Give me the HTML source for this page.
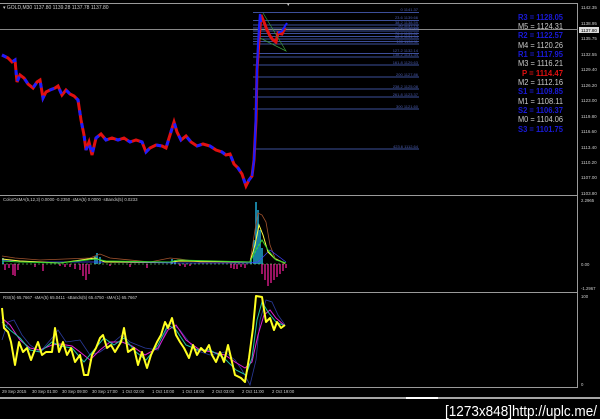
<!DOCTYPE html>
<html><head><meta charset="utf-8"><style>
html,body{margin:0;padding:0;background:#000;width:600px;height:419px;overflow:hidden}
svg{display:block}
text{font-family:"Liberation Sans",sans-serif}
</style></head><body>
<svg width="600" height="419" viewBox="0 0 600 419" xmlns="http://www.w3.org/2000/svg">
<rect width="600" height="419" fill="#000"/>
<g stroke="#9a9a9a" stroke-width="1" fill="none">
<line x1="0" y1="3.5" x2="578" y2="3.5"/>
<line x1="577.5" y1="3" x2="577.5" y2="388"/>
<line x1="0" y1="195.5" x2="578" y2="195.5"/>
<line x1="0" y1="292.5" x2="578" y2="292.5"/>
<line x1="0" y1="387.5" x2="578" y2="387.5"/>
</g>
<line x1="0" y1="398" x2="600" y2="398" stroke="#ddd" stroke-width="1.5"/>
<rect x="406" y="397" width="32" height="2" fill="#fff"/>
<line x1="0" y1="29.5" x2="578" y2="29.5" stroke="#888" stroke-width="1"/>
<text x="3" y="9" fill="#ccc" font-size="5">▾ GOLD,M30  1137.80 1139.28 1137.78 1137.80</text>
<text x="287" y="6" fill="#ccc" font-size="5">▾</text>
<g stroke="#3d4f9a" stroke-width="0.9">
<line x1="253" y1="12.5" x2="419" y2="12.5"/><line x1="253" y1="20.5" x2="419" y2="20.5"/>
<line x1="253" y1="25" x2="419" y2="25"/><line x1="253" y1="28" x2="419" y2="28"/>
<line x1="253" y1="31" x2="419" y2="31"/><line x1="253" y1="33.5" x2="419" y2="33.5"/>
<line x1="253" y1="36.5" x2="419" y2="36.5"/><line x1="253" y1="39" x2="419" y2="39"/>
<line x1="253" y1="41.5" x2="419" y2="41.5"/><line x1="253" y1="44" x2="419" y2="44"/>
<line x1="253" y1="53.5" x2="419" y2="53.5"/><line x1="253" y1="57" x2="419" y2="57"/>
<line x1="253" y1="65" x2="419" y2="65"/><line x1="253" y1="77" x2="419" y2="77"/>
<line x1="253" y1="89" x2="419" y2="89"/><line x1="253" y1="97" x2="419" y2="97"/>
<line x1="253" y1="109" x2="419" y2="109"/><line x1="253" y1="149" x2="419" y2="149"/>
</g>
<g fill="#4a5cb0" font-size="4" text-anchor="end">
<text x="418" y="11">0  1141.37</text><text x="418" y="19">23.6 1139.66</text>
<text x="418" y="24">38.2 1138.59</text><text x="418" y="27">50 1137.74</text>
<text x="418" y="30">61.8 1136.88</text><text x="418" y="35">76.4 1135.82</text>
<text x="418" y="38">88.6 1134.94</text><text x="418" y="43">100 1134.11</text>
<text x="418" y="52">127.2 1132.14</text><text x="418" y="56">138.2 1131.34</text>
<text x="418" y="64">161.8 1129.63</text><text x="418" y="76">200 1127.86</text>
<text x="418" y="88">238.2 1125.08</text><text x="418" y="96">261.8 1123.37</text>
<text x="418" y="108">300 1121.60</text><text x="418" y="148">423.6 1112.64</text>
</g>
<g font-size="8">
<text x="518" y="20" fill="#1a1ad8" font-weight="bold" textLength="45" lengthAdjust="spacingAndGlyphs">R3 = 1128.05</text>
<text x="518" y="29" fill="#c8c8c8" textLength="45" lengthAdjust="spacingAndGlyphs">M5 = 1124.31</text>
<text x="518" y="38" fill="#1a1ad8" font-weight="bold" textLength="45" lengthAdjust="spacingAndGlyphs">R2 = 1122.57</text>
<text x="518" y="48" fill="#c8c8c8" textLength="45" lengthAdjust="spacingAndGlyphs">M4 = 1120.26</text>
<text x="518" y="57" fill="#1a1ad8" font-weight="bold" textLength="45" lengthAdjust="spacingAndGlyphs">R1 = 1117.95</text>
<text x="518" y="66" fill="#c8c8c8" textLength="45" lengthAdjust="spacingAndGlyphs">M3 = 1116.21</text>
<text x="522" y="76" fill="#e01010" font-weight="bold" textLength="41" lengthAdjust="spacingAndGlyphs">P  = 1114.47</text>
<text x="518" y="85" fill="#c8c8c8" textLength="45" lengthAdjust="spacingAndGlyphs">M2 = 1112.16</text>
<text x="518" y="94" fill="#1a1ad8" font-weight="bold" textLength="45" lengthAdjust="spacingAndGlyphs">S1 = 1109.85</text>
<text x="518" y="104" fill="#c8c8c8" textLength="45" lengthAdjust="spacingAndGlyphs">M1 = 1108.11</text>
<text x="518" y="113" fill="#1a1ad8" font-weight="bold" textLength="45" lengthAdjust="spacingAndGlyphs">S2 = 1106.37</text>
<text x="518" y="122" fill="#c8c8c8" textLength="45" lengthAdjust="spacingAndGlyphs">M0 = 1104.06</text>
<text x="518" y="132" fill="#1a1ad8" font-weight="bold" textLength="45" lengthAdjust="spacingAndGlyphs">S3 = 1101.75</text>
</g>
<g fill="#ccc" font-size="4.5">
<text x="581" y="9">1142.35</text><text x="581" y="25">1138.95</text>
<text x="581" y="40">1135.75</text><text x="581" y="56">1132.55</text>
<text x="581" y="71">1129.40</text><text x="581" y="87">1126.20</text>
<text x="581" y="102">1123.00</text><text x="581" y="118">1119.80</text>
<text x="581" y="133">1116.60</text><text x="581" y="149">1113.40</text>
<text x="581" y="164">1110.20</text><text x="581" y="179">1107.00</text>
<text x="581" y="195">1103.80</text>
</g>
<rect x="579" y="27" width="20" height="6" fill="#ddd"/>
<text x="581" y="32" fill="#000" font-size="4.5">1137.80</text>
<polyline fill="none" stroke="#e01010" stroke-width="3" points="2,55 8,58 12,62 15,60 17,82 20,75 24,78 28,84 33,88 37,82 40,80 43,98 46,92 50,90 55,88 58,86 62,95 66,90 70,94 74,96 78,100 81,120 84,135 86,150 89,142 92,155 96,138 101,134 106,140 112,138 118,140 124,138 130,142 136,140 142,142 146,152 150,148 156,145 162,146 166,148 170,135 174,122 177,132 181,140 186,136 191,142 197,146 203,144 210,146 216,150 222,152 226,155 230,154 234,164 238,168 242,174 246,186 249,180 252,176 254,160 256,120 257,70 259,40 261,15 264,22 267,30 270,36 273,40 276,42 278,33 282,34 285,28"/>
<polyline fill="none" stroke="#1c1cff" stroke-width="3" stroke-dasharray="5 8" points="2,55 8,58 12,62 15,60 17,82 20,75 24,78 28,84 33,88 37,82 40,80 43,98 46,92 50,90 55,88 58,86 62,95 66,90 70,94 74,96 78,100 81,120 84,135 86,150 89,142 92,155 96,138 101,134 106,140 112,138 118,140 124,138 130,142 136,140 142,142 146,152 150,148 156,145 162,146 166,148 170,135 174,122 177,132 181,140 186,136 191,142 197,146 203,144 210,146 216,150 222,152 226,155 230,154 234,164 238,168 242,174 246,186 249,180 252,176"/>
<polyline fill="none" stroke="#1c1cff" stroke-width="2.2" points="252,176 254,160 255,140 256,110 257,70 258,45 259,28 260,14 261,22"/>
<polyline fill="none" stroke="#1c1cff" stroke-width="2" points="278,33 282,31 285,26 287,23"/>
<polyline fill="none" stroke="#3a9a3a" stroke-width="0.7" points="263,13 286,51 260,38"/>
<text x="3" y="201" fill="#ccc" font-size="4.3">ColorOsMA(5,12,3) 0.0000 -0.2350  ·sMA(5) 0.0000  ·sBands(5) 0.0233</text>
<g fill="#ccc" font-size="4.3"><text x="581" y="202">2.2965</text><text x="581" y="266">0.00</text><text x="581" y="290">-1.2967</text></g>
<g stroke="#c0187a" stroke-width="1.6">
<line x1="5" y1="264" x2="5" y2="270"/><line x1="9" y1="264" x2="9" y2="268"/><line x1="13" y1="264" x2="13" y2="275"/><line x1="15" y1="264" x2="15" y2="276"/><line x1="18" y1="264" x2="18" y2="270"/>
<line x1="35" y1="264" x2="35" y2="267"/><line x1="43" y1="264" x2="43" y2="271"/><line x1="60" y1="264" x2="60" y2="266"/>
<line x1="65" y1="264" x2="65" y2="267"/><line x1="70" y1="264" x2="70" y2="267"/><line x1="75" y1="264" x2="75" y2="269"/><line x1="80" y1="264" x2="80" y2="270"/><line x1="83" y1="264" x2="83" y2="276"/><line x1="86" y1="264" x2="86" y2="280"/><line x1="89" y1="264" x2="89" y2="274"/>
<line x1="110" y1="264" x2="110" y2="266"/><line x1="130" y1="264" x2="130" y2="267"/><line x1="147" y1="264" x2="147" y2="268"/>
<line x1="180" y1="264" x2="180" y2="266"/><line x1="185" y1="264" x2="185" y2="267"/><line x1="190" y1="264" x2="190" y2="266"/>
<line x1="231" y1="264" x2="231" y2="268"/><line x1="234" y1="264" x2="234" y2="269"/><line x1="237" y1="264" x2="237" y2="269"/><line x1="241" y1="264" x2="241" y2="267"/><line x1="245" y1="264" x2="245" y2="268"/>
<line x1="262" y1="264" x2="262" y2="274"/><line x1="265" y1="264" x2="265" y2="280"/><line x1="268" y1="264" x2="268" y2="286"/><line x1="271" y1="264" x2="271" y2="283"/><line x1="274" y1="264" x2="274" y2="280"/><line x1="277" y1="264" x2="277" y2="277"/><line x1="280" y1="264" x2="280" y2="274"/><line x1="283" y1="264" x2="283" y2="271"/><line x1="286" y1="264" x2="286" y2="268"/>
</g>
<g stroke="#1fa0c8" stroke-width="1.6">
<line x1="3" y1="264" x2="3" y2="258"/><line x1="95" y1="264" x2="95" y2="256"/><line x1="97" y1="264" x2="97" y2="253"/><line x1="100" y1="264" x2="100" y2="257"/><line x1="172" y1="264" x2="172" y2="259"/><line x1="175" y1="264" x2="175" y2="260"/>
<line x1="251" y1="264" x2="251" y2="258"/><line x1="254" y1="264" x2="254" y2="240"/><line x1="256" y1="264" x2="256" y2="202"/><line x1="258" y1="264" x2="258" y2="210"/><line x1="260" y1="264" x2="260" y2="230"/><line x1="262" y1="264" x2="262" y2="248"/>
</g>
<polyline fill="none" stroke="#a0522d" stroke-width="0.8" points="2,256 15,258 40,260 90,258 100,254 110,258 150,262 170,258 180,259 200,262 250,262 255,230 258,213 262,215 266,222 270,245 275,258 285,264"/>
<polyline fill="none" stroke="#4040ff" stroke-width="0.7" points="2,260 40,262 95,262 180,263 250,263 258,262 270,250 286,262"/>
<polyline fill="none" stroke="#ffff40" stroke-width="1" points="2,259 20,261 60,263 95,258 105,262 170,262 180,261 250,262 255,245 259,225 263,235 268,252 275,259 285,263"/>
<polyline fill="none" stroke="#30d030" stroke-width="1" points="2,261 20,262 60,263 96,259 106,261 170,262 178,260 250,262 256,250 262,240 268,250 276,260 286,263"/>
<polyline fill="none" stroke="#7fff7f" stroke-width="0.5" stroke-dasharray="2 2" points="2,264 286,264"/>
<text x="3" y="299" fill="#ccc" font-size="4.3">RSI(5) 65.7667  ·sMA(5) 65.0411  ·sBands(5) 65.4750  ·sMA(1) 65.7667</text>
<g fill="#ccc" font-size="4.3"><text x="581" y="298">100</text><text x="581" y="386">0</text></g>
<polyline fill="none" stroke="#2a3a9a" stroke-width="0.8" points="2,340 8,322 14,320 22,335 30,345 40,352 52,338 58,330 66,342 80,340 90,355 100,352 110,345 122,335 130,342 145,348 158,350 170,322 180,330 195,350 210,355 225,352 235,360 242,370 250,385 256,360 260,320 266,300 272,302 278,315 285,325"/>
<polyline fill="none" stroke="#e020d0" stroke-width="1" points="2,318 10,325 20,340 30,348 40,350 52,345 60,344 72,346 80,352 90,360 100,350 110,342 122,342 132,346 145,355 158,348 168,330 176,325 186,340 200,350 212,352 225,355 235,362 245,368 252,362 258,335 264,315 270,310 276,318 284,325"/>
<polyline fill="none" stroke="#20c0a0" stroke-width="1" points="2,322 10,330 20,338 30,350 40,352 52,342 60,346 72,348 84,362 94,350 104,338 114,345 124,338 136,352 146,360 158,345 168,325 176,330 186,345 198,350 210,350 224,358 236,370 246,375 252,358 257,320 262,302 268,312 276,322 285,326"/>
<polyline fill="none" stroke="#ffff20" stroke-width="2" stroke-linejoin="round" points="2,308 4,328 8,332 11,342 15,365 19,342 23,352 27,348 31,360 34,352 38,342 42,355 46,352 52,352 55,328 59,352 63,342 67,355 71,348 75,362 80,355 84,375 88,375 92,355 96,348 100,338 103,335 107,348 111,345 115,352 121,342 124,328 128,352 134,348 138,365 142,352 147,368 151,355 157,342 161,335 165,322 168,328 172,318 176,335 180,342 184,348 189,358 193,345 197,355 201,348 205,352 209,345 212,355 216,362 220,352 224,362 228,345 232,362 235,375 241,378 245,382 249,358 253,328 256,296 262,297 266,322 270,318 274,330 277,322 281,328 285,325"/>
<g fill="#ccc" font-size="4.3">
<text x="2" y="393">29 Sep 2015</text><text x="32" y="393">30 Sep 01:00</text><text x="62" y="393">30 Sep 09:00</text><text x="92" y="393">30 Sep 17:00</text><text x="122" y="393">1 Oct 02:00</text><text x="152" y="393">1 Oct 10:00</text><text x="182" y="393">1 Oct 18:00</text><text x="212" y="393">2 Oct 03:00</text><text x="242" y="393">2 Oct 11:00</text><text x="272" y="393">2 Oct 19:00</text>
</g>
<text x="597" y="416" fill="#fff" font-size="15" text-anchor="end" font-family="Liberation Mono, monospace" textLength="152" lengthAdjust="spacingAndGlyphs">[1273x848]http://uplc.me/</text>
</svg>
</body></html>
